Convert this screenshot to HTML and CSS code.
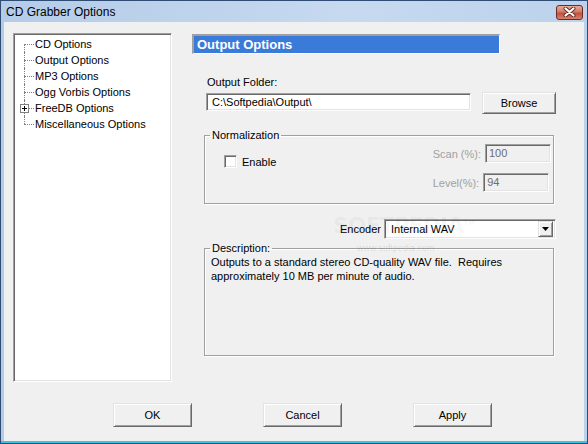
FILE: index.html
```html
<!DOCTYPE html>
<html lang="en">
<head>
    <meta charset="UTF-8">
    <title>CD Grabber Options</title>
    <link rel="stylesheet" href="styles.css">
</head>
<body>
    <div class="window">
        <div class="titlebar">
            <span class="title">CD Grabber Options</span>
            <span class="close-btn">
                <svg width="13" height="10" viewBox="0 0 13 10">
                    <path d="M2.5 1.5 L10.5 8.5 M10.5 1.5 L2.5 8.5" stroke="#5a2a22" stroke-width="4" stroke-linecap="round"/>
                    <path d="M2.5 1.5 L10.5 8.5 M10.5 1.5 L2.5 8.5" stroke="#fff" stroke-width="2.2" stroke-linecap="round"/>
                </svg>
            </span>
        </div>

        <div class="client">
            <div class="main">
                <div class="tree">
                    <ul class="tree-list">
                        <li>CD Options</li>
                        <li>Output Options</li>
                        <li>MP3 Options</li>
                        <li>Ogg Vorbis Options</li>
                        <li class="collapsed"><span class="expander"></span>FreeDB Options</li>
                        <li>Miscellaneous Options</li>
                    </ul>
                </div>

                <div class="page">
                    <div class="page-header">Output Options</div>

                    <div class="folder-label">Output Folder:</div>
                    <div class="folder-row">
                        <div class="textbox folder-input">C:\Softpedia\Output\</div>
                        <div class="btn browse-btn">Browse</div>
                    </div>

                    <fieldset class="group normalization">
                        <legend>Normalization</legend>
                        <div class="norm-body">
                            <div class="check">
                                <span class="checkbox"></span>
                                <span>Enable</span>
                            </div>
                            <div class="levels">
                                <div class="level-row">
                                    <span class="disabled-label">Scan (%):</span>
                                    <div class="textbox disabled">100</div>
                                </div>
                                <div class="level-row">
                                    <span class="disabled-label">Level(%):</span>
                                    <div class="textbox disabled">94</div>
                                </div>
                            </div>
                        </div>
                    </fieldset>

                    <div class="encoder-row">
                        <span>Encoder</span>
                        <div class="combo">
                            <span class="combo-text">Internal WAV</span>
                            <span class="combo-btn">
                                <svg width="7" height="4" viewBox="0 0 7 4"><path d="M0 0 H7 L3.5 4 Z" fill="#000"/></svg>
                            </span>
                        </div>
                    </div>

                    <fieldset class="group description">
                        <legend>Description:</legend>
                        <p>Outputs to a standard stereo CD-quality WAV file.&nbsp; Requires approximately 10 MB per minute of audio.</p>
                    </fieldset>

                    <div class="watermark">SOFTPEDIA<sup>TM</sup></div>
                    <div class="watermark-url">www.softpedia.com</div>
                </div>
            </div>

            <div class="buttons">
                <div class="btn dialog-btn">OK</div>
                <div class="btn dialog-btn">Cancel</div>
                <div class="btn dialog-btn">Apply</div>
            </div>
        </div>
    </div>
</body>
</html>
```

FILE: styles.css
```css
* {
    box-sizing: border-box;
}

body {
    margin: 0;
    background: #f0f0f0;
    font-family: "Liberation Sans", Arial, sans-serif;
    font-size: 11px;
    color: #000;
}

.window {
    width: 588px;
    height: 444px;
    border: 1px solid #2f4d74;
    background: linear-gradient(90deg, #b4cce8, #c6d9ef 60%, #bcd2ec);
    box-shadow: inset 0 -2px 0 #3cc3e0;
}

.titlebar {
    height: 21px;
    display: flex;
    align-items: center;
    justify-content: space-between;
    padding: 0 4px 0 5px;
}

.title {
    font-size: 12px;
    color: #000;
}

.close-btn {
    width: 27px;
    height: 15px;
    margin-top: 1px;
    border: 1px solid #6b2c24;
    border-radius: 3px;
    background: linear-gradient(#e8a99a, #d47a68 45%, #c0503c 55%, #d9806b);
    display: flex;
    align-items: center;
    justify-content: center;
}

.client {
    height: 419px;
    margin: 0 3px;
    background: #f0f0f0;
    padding: 11px 0 0 9px;
}

.main {
    display: flex;
    gap: 20px;
}

/* sunken / raised edges, classic style */
.tree,
.textbox,
.combo,
.checkbox {
    border: 1px solid;
    border-color: #a0a0a0 #fff #fff #a0a0a0;
    box-shadow: inset 1px 1px 0 #696969, inset -1px -1px 0 #e3e3e3;
}

.btn,
.combo-btn {
    border: 1px solid;
    border-color: #e3e3e3 #696969 #696969 #e3e3e3;
    box-shadow: inset 1px 1px 0 #fff, inset -1px -1px 0 #a0a0a0;
    background: #f0f0f0;
    display: flex;
    align-items: center;
    justify-content: center;
}

.tree {
    width: 159px;
    height: 349px;
    background: #fff;
    padding: 2px 0 0 2px;
}

.tree-list {
    list-style: none;
    margin: 0;
    padding: 0;
}

.tree-list li {
    position: relative;
    height: 16px;
    line-height: 16px;
    padding-left: 19px;
    white-space: nowrap;
}

.tree-list li::before {
    content: "";
    position: absolute;
    left: 8px;
    top: 8px;
    width: 10px;
    border-top: 1px dotted #808080;
}

.tree-list li::after {
    content: "";
    position: absolute;
    left: 8px;
    top: 0;
    height: 16px;
    border-left: 1px dotted #808080;
}

.tree-list li:first-child::after {
    top: 8px;
    height: 8px;
}

.tree-list li:last-child::after {
    height: 8px;
}

.expander {
    position: absolute;
    z-index: 1;
    left: 4px;
    top: 4px;
    width: 9px;
    height: 9px;
    border: 1px solid #808080;
    background: #fff;
}

.expander::before,
.expander::after {
    content: "";
    position: absolute;
    background: #000;
}

.expander::before {
    left: 1px;
    top: 3px;
    width: 5px;
    height: 1px;
}

.expander::after {
    left: 3px;
    top: 1px;
    width: 1px;
    height: 5px;
}

.page {
    position: relative;
    width: 364px;
}

.page-header {
    margin-top: 1px;
    width: 308px;
    height: 20px;
    border: 2px solid #a0a0a0;
    border-right: 1px solid #fff;
    border-bottom: 1px solid #fff;
    background: #3a7bd9;
    color: #fff;
    font-size: 13px;
    font-weight: bold;
    line-height: 17px;
    padding-left: 3px;
}

.folder-label {
    margin: 22px 0 0 15px;
    line-height: 13px;
}

.folder-row {
    display: flex;
    align-items: flex-start;
    gap: 11px;
    margin: 3px 0 0 14px;
}

.textbox {
    height: 18px;
    background: #fff;
    line-height: 16px;
    padding-left: 5px;
    white-space: nowrap;
}

.folder-input {
    width: 265px;
    margin-top: 1px;
}

.browse-btn {
    width: 74px;
    height: 22px;
}

.group {
    margin: 15px 0 0 12px;
    width: 350px;
    border: 1px solid #a0a0a0;
    box-shadow: 1px 1px 0 #fff, inset 1px 1px 0 #fff;
    padding: 0;
    min-width: 0;
}

.group legend {
    margin-left: 5px;
    padding: 0 2px;
    line-height: 13px;
}

.norm-body {
    display: flex;
    justify-content: space-between;
    padding: 2px 2px 11px 19px;
}

.check {
    display: flex;
    align-items: center;
    gap: 5px;
    margin-top: 11px;
    height: 13px;
}

.checkbox {
    width: 13px;
    height: 13px;
    background: #fff;
}

.levels {
    display: flex;
    flex-direction: column;
    gap: 10px;
}

.level-row {
    display: flex;
    align-items: center;
    gap: 4px;
}

.disabled-label {
    color: #a0a0a0;
}

.textbox.disabled {
    width: 66px;
    height: 19px;
    background: #f0f0f0;
    color: #6d6d6d;
    padding-left: 3px;
}

.encoder-row {
    display: flex;
    justify-content: flex-end;
    align-items: center;
    gap: 3px;
    margin-top: 15px;
}

.combo {
    width: 172px;
    height: 20px;
    background: #fff;
    display: flex;
    align-items: center;
    justify-content: space-between;
    padding: 2px;
}

.combo-text {
    padding-left: 4px;
}

.combo-btn {
    width: 15px;
    height: 16px;
}

.description {
    margin-top: 3px;
    height: 114px;
}

.description p {
    margin: 0;
    padding: 0 6px;
    line-height: 14px;
}

.watermark {
    position: absolute;
    left: 141px;
    top: 180px;
    font-family: "DejaVu Sans", sans-serif;
    font-size: 22px;
    line-height: 20px;
    font-weight: bold;
    letter-spacing: -1px;
    color: rgba(0, 0, 0, 0.05);
    pointer-events: none;
}

.watermark sup {
    font-size: 7px;
    letter-spacing: 0;
}

.watermark-url {
    position: absolute;
    left: 165px;
    top: 211px;
    font-size: 9px;
    line-height: 9px;
    color: rgba(0, 0, 0, 0.12);
    pointer-events: none;
}

.buttons {
    display: flex;
    gap: 71px;
    margin-top: 21px;
    padding-left: 100px;
}

.dialog-btn {
    width: 79px;
    height: 24px;
}
```
